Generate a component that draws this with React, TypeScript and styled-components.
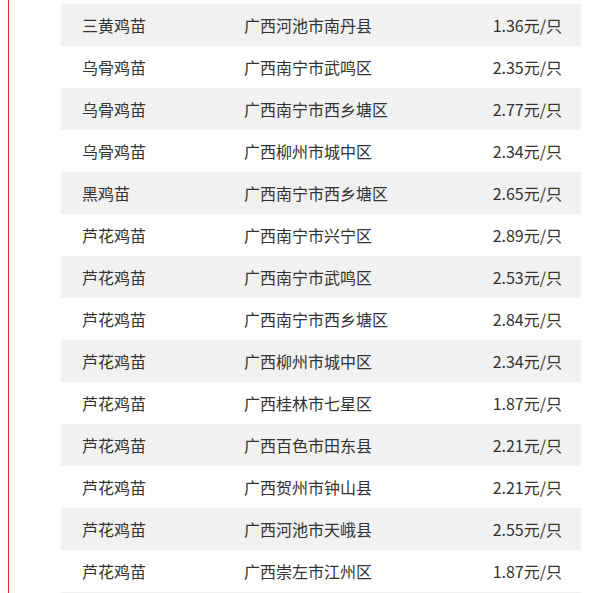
import React from "react";
import styled, { createGlobalStyle } from "styled-components";

const Global = createGlobalStyle`
  html, body { margin: 0; padding: 0; background: #fff; }
  body { font-family: "Microsoft YaHei", "Noto Sans CJK SC", "Noto Sans", sans-serif; }
`;

const Page = styled.div`
  margin-left: 8px;
  border-left: 1px solid #e0261b;
  padding: 4px 0 0 52px;
  height: 589px;
  overflow: hidden;
`;

const Table = styled.div`
  width: 520px;
  display: flex;
  flex-direction: column;
`;

const Row = styled.div<{ $shade: boolean }>`
  display: grid;
  grid-template-columns: 162px 1fr auto;
  align-items: center;
  height: 42px;
  padding: 0 19px 0 21px;
  background: ${(p) => (p.$shade ? "#f1f1f1" : "#fff")};
  color: #333;
  font-size: 16px;
  line-height: 42px;
`;

const Cell = styled.div<{ $right?: boolean }>`
  text-align: ${(p) => (p.$right ? "right" : "left")};
  white-space: nowrap;
`;

const rows: [string, string, string][] = [
  ["三黄鸡苗", "广西河池市南丹县", "1.36元/只"],
  ["乌骨鸡苗", "广西南宁市武鸣区", "2.35元/只"],
  ["乌骨鸡苗", "广西南宁市西乡塘区", "2.77元/只"],
  ["乌骨鸡苗", "广西柳州市城中区", "2.34元/只"],
  ["黑鸡苗", "广西南宁市西乡塘区", "2.65元/只"],
  ["芦花鸡苗", "广西南宁市兴宁区", "2.89元/只"],
  ["芦花鸡苗", "广西南宁市武鸣区", "2.53元/只"],
  ["芦花鸡苗", "广西南宁市西乡塘区", "2.84元/只"],
  ["芦花鸡苗", "广西柳州市城中区", "2.34元/只"],
  ["芦花鸡苗", "广西桂林市七星区", "1.87元/只"],
  ["芦花鸡苗", "广西百色市田东县", "2.21元/只"],
  ["芦花鸡苗", "广西贺州市钟山县", "2.21元/只"],
  ["芦花鸡苗", "广西河池市天峨县", "2.55元/只"],
  ["芦花鸡苗", "广西崇左市江州区", "1.87元/只"],
  ["", "", ""],
];

export default function App() {
  return (
    <>
      <Global />
      <Page>
        <Table>
          {rows.map((r, i) => (
            <Row key={i} $shade={i % 2 === 0}>
              <Cell>{r[0]}</Cell>
              <Cell>{r[1]}</Cell>
              <Cell $right>{r[2]}</Cell>
            </Row>
          ))}
        </Table>
      </Page>
    </>
  );
}
